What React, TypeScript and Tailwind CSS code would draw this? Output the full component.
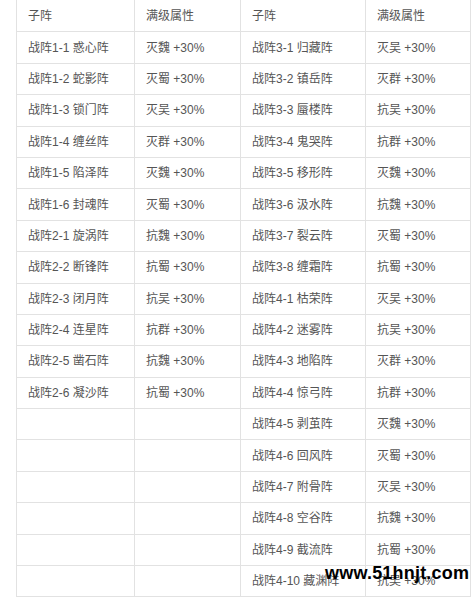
import React from "react"

const left: [string, string][] = [
  ["战阵1-1 惑心阵", "灭魏 +30%"],
  ["战阵1-2 蛇影阵", "灭蜀 +30%"],
  ["战阵1-3 锁门阵", "灭吴 +30%"],
  ["战阵1-4 缠丝阵", "灭群 +30%"],
  ["战阵1-5 陷泽阵", "灭魏 +30%"],
  ["战阵1-6 封魂阵", "灭蜀 +30%"],
  ["战阵2-1 旋涡阵", "抗魏 +30%"],
  ["战阵2-2 断锋阵", "抗蜀 +30%"],
  ["战阵2-3 闭月阵", "抗吴 +30%"],
  ["战阵2-4 连星阵", "抗群 +30%"],
  ["战阵2-5 凿石阵", "抗魏 +30%"],
  ["战阵2-6 凝沙阵", "抗蜀 +30%"],
]

const right: [string, string][] = [
  ["战阵3-1 归藏阵", "灭吴 +30%"],
  ["战阵3-2 镇岳阵", "灭群 +30%"],
  ["战阵3-3 蜃楼阵", "抗吴 +30%"],
  ["战阵3-4 鬼哭阵", "抗群 +30%"],
  ["战阵3-5 移形阵", "灭魏 +30%"],
  ["战阵3-6 汲水阵", "抗魏 +30%"],
  ["战阵3-7 裂云阵", "灭蜀 +30%"],
  ["战阵3-8 缠霜阵", "抗蜀 +30%"],
  ["战阵4-1 枯荣阵", "灭吴 +30%"],
  ["战阵4-2 迷雾阵", "抗吴 +30%"],
  ["战阵4-3 地陷阵", "灭群 +30%"],
  ["战阵4-4 惊弓阵", "抗群 +30%"],
  ["战阵4-5 剥茧阵", "灭魏 +30%"],
  ["战阵4-6 回风阵", "灭蜀 +30%"],
  ["战阵4-7 附骨阵", "灭吴 +30%"],
  ["战阵4-8 空谷阵", "抗魏 +30%"],
  ["战阵4-9 截流阵", "抗蜀 +30%"],
  ["战阵4-10 藏渊阵", "抗吴 +30%"],
]

const cell = "border border-[#e2e2e2] pl-[11px] align-middle whitespace-nowrap"

export default function App() {
  const rows = right.map((r, i) => [left[i]?.[0] ?? "", left[i]?.[1] ?? "", r[0], r[1]])

  return (
    <div className="relative w-[471px] h-[604px] bg-white overflow-hidden font-['Liberation_Sans','Noto_Sans_CJK_SC',sans-serif] text-[12px] text-[#555]">
      <table className="ml-[16px] mt-[-1px] border-collapse table-fixed w-[454px]">
        <colgroup>
          <col className="w-[118px]" />
          <col className="w-[106px]" />
          <col className="w-[125px]" />
          <col className="w-[105px]" />
        </colgroup>
        <tbody>
          <tr className="h-[32.4px]">
            <td className={cell}>子阵</td>
            <td className={cell}>满级属性</td>
            <td className={cell}>子阵</td>
            <td className={cell}>满级属性</td>
          </tr>
          {rows.map((row, i) => (
            <tr key={i} className="h-[31.4px]">
              {row.map((t, j) => (
                <td key={j} className={cell}>
                  {t}
                </td>
              ))}
            </tr>
          ))}
        </tbody>
      </table>

      {/* watermark */}
      <div className="absolute left-[325px] top-[564px] font-['Liberation_Sans',sans-serif] font-bold text-[18px] leading-none text-black tracking-[0.2px]">
        www.51hnjt.com
      </div>
    </div>
  )
}
